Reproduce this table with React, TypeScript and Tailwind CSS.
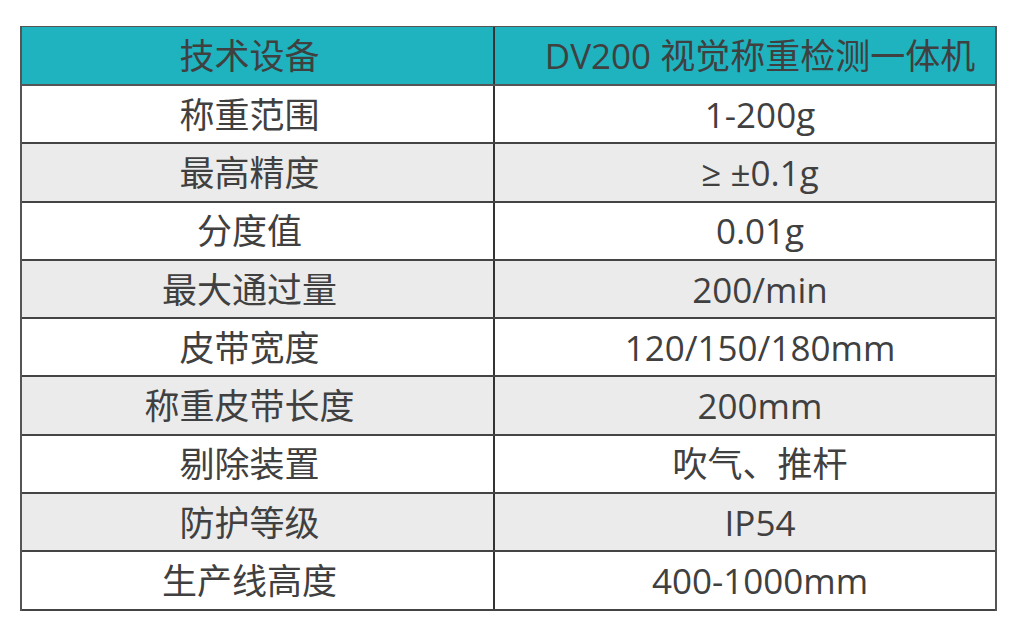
const rows: [string, string][] = [
  ['称重范围', '1-200g'],
  ['最高精度', '≥ ±0.1g'],
  ['分度值', '0.01g'],
  ['最大通过量', '200/min'],
  ['皮带宽度', '120/150/180mm'],
  ['称重皮带长度', '200mm'],
  ['剔除装置', '吹气、推杆'],
  ['防护等级', 'IP54'],
  ['生产线高度', '400-1000mm'],
];

const font = { fontFamily: '"Open Sans", "Noto Sans CJK SC", sans-serif' };

export default function App() {
  return (
    <div className="w-[1024px] h-[630px] bg-white pt-[26px] pl-[20px]" style={font}>
      <div className="w-[977px] border-l-2 border-r-2 border-t border-[#555] text-[35px] leading-none text-[#404040]">
        <div className="flex h-[59px] bg-[#1eb3bf] border-b-2 border-[#555]">
          <div className="w-[473px] flex items-center justify-center pr-[16px] border-r-2 border-[#333]">技术设备</div>
          <div className="flex-1 flex items-center justify-center pl-[30px]">DV200 视觉称重检测一体机</div>
        </div>
        {rows.map(([k, v], i) => (
          <div
            key={k}
            className={`flex h-[58.3px] border-b-2 border-[#444] ${i % 2 === 1 ? 'bg-[#ebebeb]' : 'bg-white'}`}
          >
            <div className="w-[473px] flex items-center justify-center pr-[16px] border-r-2 border-[#333]">{k}</div>
            <div className="flex-1 flex items-center justify-center pl-[30px]">{v}</div>
          </div>
        ))}
      </div>
    </div>
  );
}
